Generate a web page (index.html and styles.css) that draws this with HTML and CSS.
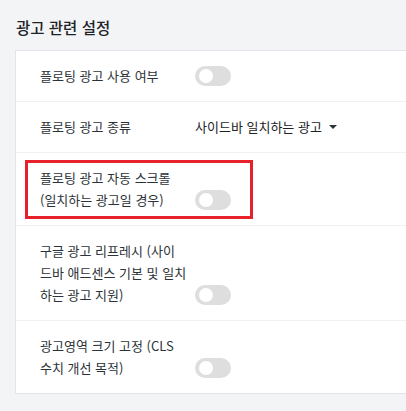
FILE: index.html
```html
<!DOCTYPE html>
<html lang="ko">
<head>
<meta charset="utf-8">
<link rel="stylesheet" href="styles.css">
</head>
<body>
<div class="page">
  <h2 class="title">광고 관련 설정</h2>
  <div class="card">
    <div class="row">
      <div class="label">플로팅 광고 사용 여부</div>
      <div class="control"><span class="toggle"><span class="knob"></span></span></div>
    </div>
    <div class="row">
      <div class="label">플로팅 광고 종류</div>
      <div class="control"><span class="select">사이드바 일치하는 광고<span class="caret"></span></span></div>
    </div>
    <div class="row highlighted">
      <div class="label">플로팅 광고 자동 스크롤 (일치하는 광고일 경우)</div>
      <div class="control"><span class="toggle"><span class="knob"></span></span></div>
    </div>
    <div class="row">
      <div class="label nowrap">구글 광고 리프레시 (사이<br>드바 애드센스 기본 및 일치<br>하는 광고 지원)</div>
      <div class="control"><span class="toggle"><span class="knob"></span></span></div>
    </div>
    <div class="row last">
      <div class="label">광고영역 크기 고정 (CLS 수치 개선 목적)</div>
      <div class="control"><span class="toggle"><span class="knob"></span></span></div>
    </div>
  </div>
</div>
</body>
</html>
```
FILE: styles.css
```css
html, body {
  margin: 0;
  padding: 0;
  background: #f3f4f6;
  width: 406px;
  height: 411px;
  overflow: hidden;
}
.page {
  padding: 15px 0 0 15px;
  font-family: "Noto Sans CJK KR", "Noto Sans", sans-serif;
  color: #1d2327;
}
.title {
  margin: 0 0 11px 1px;
  font-size: 15.5px;
  line-height: 24px;
  font-weight: 500;
  color: #1d2327;
}
.card {
  width: 420px;
  background: #fff;
  border: 1px solid #e2e4e7;
}
.row {
  position: relative;
  display: flex;
  align-items: flex-end;
  padding: 14px 0 14px 24px;
  border-bottom: 1px solid #f0f0f1;
  font-size: 13px;
  line-height: 22px;
  color: #2c3338;
}
.row.last {
  border-bottom: none;
}
.label {
  width: 145px;
  margin-right: 10px;
  min-height: 22px;
  word-break: break-all;
}
.label.nowrap {
  white-space: nowrap;
}
.control {
  display: flex;
  align-items: center;
  height: 22px;
}
.toggle {
  display: inline-block;
  position: relative;
  width: 36px;
  height: 20px;
  border-radius: 10px;
  background: #dedede;
}
.knob {
  position: absolute;
  left: 4px;
  top: 3px;
  width: 14px;
  height: 14px;
  border-radius: 50%;
  background: #fff;
}
.select {
  display: inline-flex;
  align-items: center;
  color: #1d2327;
}
.caret {
  display: inline-block;
  margin-left: 7px;
  width: 0;
  height: 0;
  border-left: 4px solid transparent;
  border-right: 4px solid transparent;
  border-top: 4px solid #2c3338;
}
.highlighted::after {
  content: "";
  position: absolute;
  left: 9px;
  top: 7px;
  width: 222px;
  height: 53px;
  border: 3px solid #e8202a;
}
```
